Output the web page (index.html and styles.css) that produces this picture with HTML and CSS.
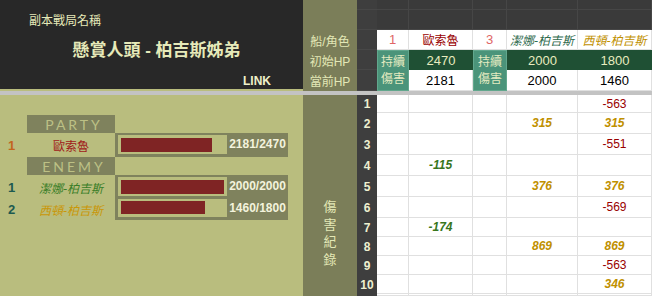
FILE: index.html
```html
<!DOCTYPE html>
<html lang="zh-Hant">
<head>
<meta charset="utf-8">
<title>懸賞人頭 - 柏吉斯姊弟</title>
<link rel="stylesheet" href="styles.css">
</head>
<body>
<div class="sheet">
  <div class="title-panel">
    <div class="subtitle">副本戰局名稱</div>
    <div class="title">懸賞人頭 - 柏吉斯姊弟</div>
    <div class="link">LINK</div>
  </div>
  <div class="olive olive-top"></div>
  <div class="stripe"></div>
  <div class="status-panel">
    <div class="status">
      <div class="tag">PARTY</div>
      <div class="num num-party">1</div>
      <div class="name name-red">歐索魯</div>
      <div class="bar"><div class="track"><div class="fill" style="width:88.3%"></div></div><div class="val">2181/2470</div></div>
      <div class="tag">ENEMY</div>
      <div class="num num-enemy">1</div>
      <div class="name name-green">潔娜-柏吉斯</div>
      <div class="bar"><div class="track"><div class="fill" style="width:100%"></div></div><div class="val">2000/2000</div></div>
      <div class="num num-enemy">2</div>
      <div class="name name-gold">西頓-柏吉斯</div>
      <div class="bar bar-last"><div class="track"><div class="fill" style="width:81.1%"></div></div><div class="val">1460/1800</div></div>
    </div>
  </div>
  <div class="olive log"><span>傷</span><span>害</span><span>紀</span><span>錄</span></div>
  <div class="dot dot-a">持續<br>傷害</div>
  <div class="dot dot-b">持續<br>傷害</div>

  <!-- row 1 -->
  <div class="rn"></div><div class="d"></div><div class="d"></div><div class="d"></div><div class="d"></div><div class="d"></div>
  <!-- row 2 -->
  <div class="rn"></div><div class="d"></div><div class="d"></div><div class="d"></div><div class="d"></div><div class="d"></div>
  <!-- row 3 header -->
  <div class="label">船/角色</div><div class="rn"></div>
  <div class="c hd-num">1</div><div class="c hd-red">歐索魯</div><div class="c hd-num">3</div><div class="c hd-green">潔娜-柏吉斯</div><div class="c hd-gold">西頓-柏吉斯</div>
  <!-- row 4 initial HP -->
  <div class="label">初始HP</div><div class="rn"></div>
  <div class="g">2470</div><div class="g">2000</div><div class="g">1800</div>
  <!-- row 5 current HP -->
  <div class="label">當前HP</div><div class="rn"></div>
  <div class="c hp">2181</div><div class="c hp">2000</div><div class="c hp">1460</div>

  <div class="n">1</div><div class="c"></div><div class="c"></div><div class="c"></div><div class="c"></div><div class="c v-red">-563</div>
  <div class="n">2</div><div class="c"></div><div class="c"></div><div class="c"></div><div class="c v-gold">315</div><div class="c v-gold">315</div>
  <div class="n">3</div><div class="c"></div><div class="c"></div><div class="c"></div><div class="c"></div><div class="c v-red">-551</div>
  <div class="n">4</div><div class="c"></div><div class="c v-green">-115</div><div class="c"></div><div class="c"></div><div class="c"></div>
  <div class="n">5</div><div class="c"></div><div class="c"></div><div class="c"></div><div class="c v-gold">376</div><div class="c v-gold">376</div>
  <div class="n">6</div><div class="c"></div><div class="c"></div><div class="c"></div><div class="c"></div><div class="c v-red">-569</div>
  <div class="n">7</div><div class="c"></div><div class="c v-green">-174</div><div class="c"></div><div class="c"></div><div class="c"></div>
  <div class="n">8</div><div class="c"></div><div class="c"></div><div class="c"></div><div class="c v-gold">869</div><div class="c v-gold">869</div>
  <div class="n">9</div><div class="c"></div><div class="c"></div><div class="c"></div><div class="c"></div><div class="c v-red">-563</div>
  <div class="n">10</div><div class="c"></div><div class="c"></div><div class="c"></div><div class="c"></div><div class="c v-gold">346</div>
  <div class="n"></div><div class="c"></div><div class="c"></div><div class="c"></div><div class="c"></div><div class="c"></div>
</div>
</body>
</html>
```
FILE: styles.css
```css
* { box-sizing: border-box; }
html, body { margin: 0; padding: 0; }
body {
  width: 652px;
  height: 296px;
  overflow: hidden;
  background: #ffffff;
  font-family: "Liberation Sans", Arial, "Noto Sans CJK TC", sans-serif;
}
.sheet {
  display: grid;
  grid-template-columns: 303px 54px 20px 32px 64px 34px 71px 74px;
  grid-template-rows: 10px 20px 20px 20px 21px 4px 18px 21px 21px 21px 21px 21px 19px 19px 19px 19px 1fr;
  width: 652px;
  height: 296px;
}

/* title panel */
.title-panel {
  grid-column: 1;
  grid-row: 1 / 6;
  background: #282828;
  border-bottom: 2px solid #b9bd7e;
  padding-top: 14px;
  color: #e6eab9;
}
.subtitle {
  padding-left: 29px;
  font-size: 12px;
  line-height: 14px;
}
.title {
  margin-top: 13px;
  padding-left: 10px;
  text-align: center;
  font-size: 17px;
  line-height: 20px;
  font-weight: bold;
}
.link {
  margin-top: 13px;
  padding-right: 32px;
  text-align: right;
  font-size: 12px;
  line-height: 14px;
  font-weight: bold;
  color: #eef0c9;
}

.stripe {
  grid-column: 1 / -1;
  grid-row: 6;
  background: #c3c3c3;
}

/* status panel */
.status-panel {
  grid-column: 1;
  grid-row: 7 / -1;
  background: #b9bd7e;
  padding-top: 20px;
}
.status {
  display: grid;
  grid-template-columns: 27px 88px 173px;
  grid-template-rows: 18px 24px 18px 24px 21px;
}
.tag {
  grid-column: 2;
  background: #7f825d;
  color: #bcc085;
  font-family: Lato, "Liberation Sans", sans-serif;
  font-size: 14px;
  letter-spacing: 3px;
  padding-left: 6px;
  display: flex;
  align-items: center;
  justify-content: center;
}
.num {
  grid-column: 1;
  font-size: 13px;
  font-weight: bold;
  padding-left: 8px;
  display: flex;
  align-items: center;
}
.num-party { color: #c2661e; }
.num-enemy { color: #1d5a50; }
.name {
  font-size: 12px;
  display: flex;
  align-items: center;
  justify-content: center;
}
.name-red { color: #a01a1a; }
.name-green { color: #3a7d28; font-style: italic; }
.name-gold { color: #c99708; font-style: italic; }
.bar {
  background: #7f825d;
  display: flex;
  padding: 2px 0 0 3px;
}
.track {
  width: 109px;
  height: 19px;
  background: #b9bd7e;
  padding: 3px 3px 2px 3px;
}
.fill {
  height: 100%;
  background: #7f2424;
}
.val {
  flex: 1;
  text-align: center;
  font-size: 12px;
  line-height: 19px;
  font-weight: bold;
  color: #f3f3dc;
}
.bar-last { padding-top: 0; }
.bar-last .track { height: 18px; padding: 2px 3px 3px 3px; }
.bar-last .val { line-height: 18px; }

/* olive label column */
.olive { background: #7b7e59; }
.olive-top { grid-column: 2; grid-row: 1 / 3; }
.label {
  grid-column: 2;
  background: #7b7e59;
  color: #e3e8b6;
  font-size: 12px;
  display: flex;
  align-items: center;
  justify-content: center;
}
.log {
  grid-column: 2;
  grid-row: 7 / -1;
  display: flex;
  flex-direction: column;
  align-items: center;
  padding-top: 103px;
  color: #e3e8b6;
  font-size: 13px;
  line-height: 17.5px;
}

/* sheet cells */
.rn {
  background: #3e3e3e;
  border-bottom: 1px solid #474747;
}
.n {
  background: #3e3e3e;
  color: #eef0d0;
  font-size: 12px;
  font-weight: bold;
  display: flex;
  align-items: center;
  justify-content: center;
}
.d {
  background: #3a3a3a;
  border-right: 1px solid #464646;
  border-bottom: 1px solid #464646;
}
.c {
  background: #ffffff;
  border-right: 1px solid #e0e0e0;
  border-bottom: 1px solid #e0e0e0;
  display: flex;
  align-items: center;
  justify-content: center;
  font-size: 12px;
}
.g {
  background: #1f5034;
  color: #e8ecbf;
  font-size: 13px;
  display: flex;
  align-items: center;
  justify-content: center;
}
.dot {
  grid-row: 4 / 6;
  background: #4b947a;
  border: 1px solid #62a78d;
  color: #e5ebc1;
  font-size: 12px;
  line-height: 17px;
  display: flex;
  align-items: center;
  justify-content: center;
  text-align: center;
}
.dot-a { grid-column: 4; }
.dot-b { grid-column: 6; }

.hd-num { color: #e06666; font-size: 13px; }
.hd-red { color: #990000; }
.hd-green { color: #2f6b4e; font-style: italic; }
.hd-gold { color: #bf9000; font-style: italic; }
.hp { color: #000000; font-size: 13px; }

.v-red { color: #990000; }
.v-gold { color: #bf9000; font-style: italic; font-weight: bold; }
.v-green { color: #38761d; font-style: italic; font-weight: bold; }
```
